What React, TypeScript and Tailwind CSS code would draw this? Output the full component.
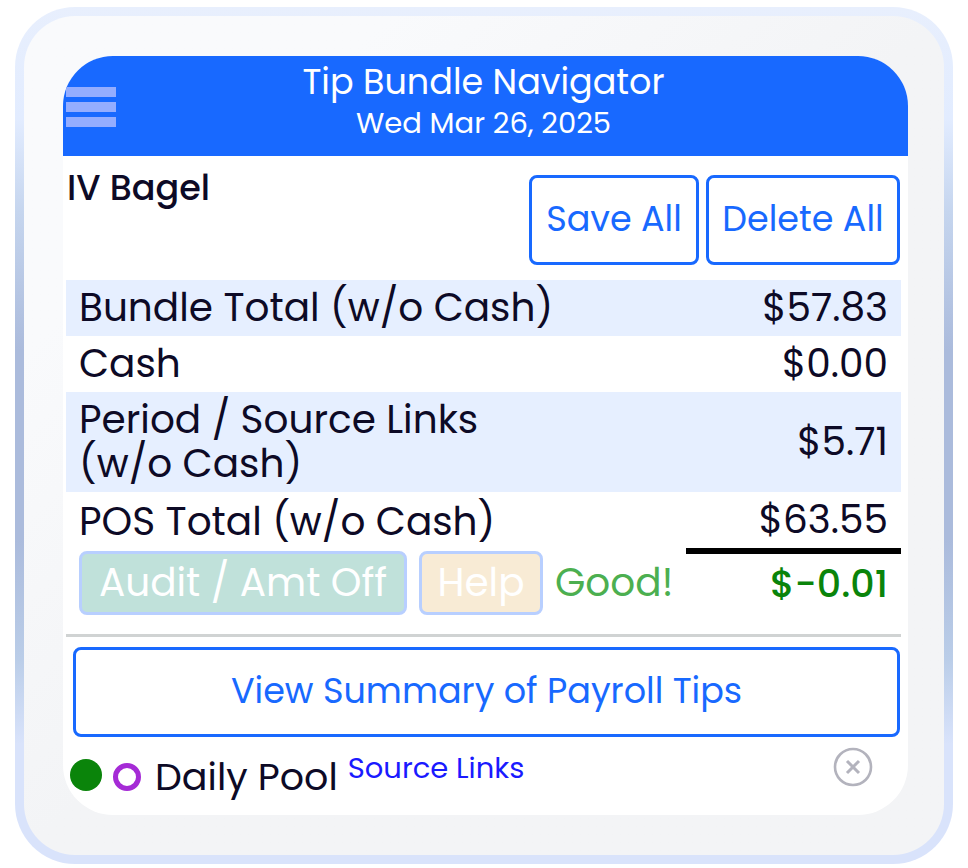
import type { ReactNode } from 'react'

interface TotalRow {
  label: ReactNode
  amount: string
  striped?: boolean
}

const totals: TotalRow[] = [
  { label: 'Bundle Total (w/o Cash)', amount: '$57.83', striped: true },
  { label: 'Cash', amount: '$0.00' },
  { label: <>Period / Source Links<br />(w/o Cash)</>, amount: '$5.71', striped: true },
  { label: 'POS Total (w/o Cash)', amount: '$63.55' },
]

function OutlineButton({ children, className = '' }: { children: ReactNode; className?: string }) {
  return (
    <button
      type="button"
      className={`h-[90px] rounded-lg border-3 border-[#1869ff] bg-white pb-[2px] text-[35px] leading-10 whitespace-nowrap text-[#1869ff] ${className}`}
    >
      {children}
    </button>
  )
}

function Header() {
  return (
    <header className="grid grid-cols-[54px_1fr_58px] items-center bg-[#1869ff] pt-1 pb-[13px] text-white">
      <button type="button" aria-label="Menu" className="flex flex-col gap-[5px] pt-[10px] pl-[3px]">
        <span className="h-[10px] w-[50px] bg-[#94adff]" />
        <span className="h-[10px] w-[50px] bg-[#94adff]" />
        <span className="h-[10px] w-[50px] bg-[#94adff]" />
      </button>
      <div className="text-center">
        <h1 className="text-[35px] leading-[44px]">Tip Bundle Navigator</h1>
        <p className="text-[29px] leading-[39px]">Wed Mar 26, 2025</p>
      </div>
    </header>
  )
}

function TotalsTable() {
  return (
    <table className="w-full table-fixed border-collapse text-[39px] leading-[44px] text-[#0d0a26]">
      <colgroup>
        <col />
        <col className="w-[215px]" />
      </colgroup>
      <tbody>
        {totals.map((row) => (
          <tr key={row.amount} className={row.striped ? 'bg-[#e6efff]' : 'bg-white'}>
            <th scope="row" className="px-[13px] py-[6px] text-left font-normal">{row.label}</th>
            <td className="px-[13px] py-[6px] text-right">{row.amount}</td>
          </tr>
        ))}
        <tr>
          <td className="pb-[19px] pl-[13px]">
            <div className="flex items-center gap-3 whitespace-nowrap">
              <button type="button" disabled className="h-16 w-[328px] rounded-lg border-3 border-[#b8cfff] bg-[#c0e1da] text-white">
                Audit / Amt Off
              </button>
              <button type="button" disabled className="h-16 w-[124px] rounded-lg border-3 border-[#b8cfff] bg-[#f8ebd5] text-white">
                Help
              </button>
              <span className="text-[#4caf50]">Good!</span>
            </div>
          </td>
          <td className="border-t-6 border-black px-[13px] pb-5 text-right text-[38px] font-medium text-[#0a840a]">$-0.01</td>
        </tr>
      </tbody>
    </table>
  )
}

function PoolRow() {
  return (
    <div className="flex h-[78px] items-start pt-[10px] pr-[35px] pl-[7px]">
      <span className="mt-3 size-8 rounded-full bg-[#0a840a]" />
      <span className="mt-4 ml-[11px] size-7 rounded-full border-5 border-[#a52bd6]" />
      <span className="mt-2 ml-[14px] text-[38px] leading-[44px] text-[#0d0a26]">Daily Pool</span>
      <a href="#source-links" className="ml-[10px] text-[29px] leading-[42px] text-[#1a1aff]">Source Links</a>
      <button type="button" aria-label="Remove Daily Pool" className="ml-auto text-[#b3b3bd]">
        <svg viewBox="0 0 40 40" className="size-10" fill="none" stroke="currentColor">
          <circle cx="20" cy="20" r="18" strokeWidth="2.6" />
          <path d="M14 14l12 12M26 14L14 26" strokeWidth="3" />
        </svg>
      </button>
    </div>
  )
}

export default function App() {
  return (
    <div className="bg-white px-[15px] pt-[7px] pb-1 font-['Poppins','Inter',sans-serif]">
      {/* Device frame */}
      <div className="rounded-[60px] bg-[linear-gradient(to_bottom,#e8effd_0%,#e2ecff_13%,#c5d5ee_24%,#abbbdc_40%,#abbbdc_62%,#bacde8_76%,#d9e3fb_86%)] p-[9px]">
        <div className="rounded-[51px] bg-linear-to-br from-[#f9fafc] from-20% via-[#f3f4f6] via-50% to-[#f3f4f6] py-10 pr-9 pl-[39px]">
          <main className="overflow-hidden rounded-[50px] bg-white">
            <Header />
            <div className="flex items-start justify-between pt-[19px] pr-2 pb-[15px] pl-1">
              <h2 className="-mt-[10px] text-[35px] leading-[46px] font-medium text-[#0d0a26]">IV Bagel</h2>
              <div className="flex gap-[7px]">
                <OutlineButton className="w-[170px]">Save All</OutlineButton>
                <OutlineButton className="w-[194px]">Delete All</OutlineButton>
              </div>
            </div>
            <div className="pr-[7px] pl-[3px]">
              <TotalsTable />
              <hr className="border-t-3 border-[#d0d3d3]" />
            </div>
            <div className="pt-[10px] pr-2 pl-[10px]">
              <OutlineButton className="w-full">View Summary of Payroll Tips</OutlineButton>
            </div>
            <PoolRow />
          </main>
        </div>
      </div>
    </div>
  )
}
